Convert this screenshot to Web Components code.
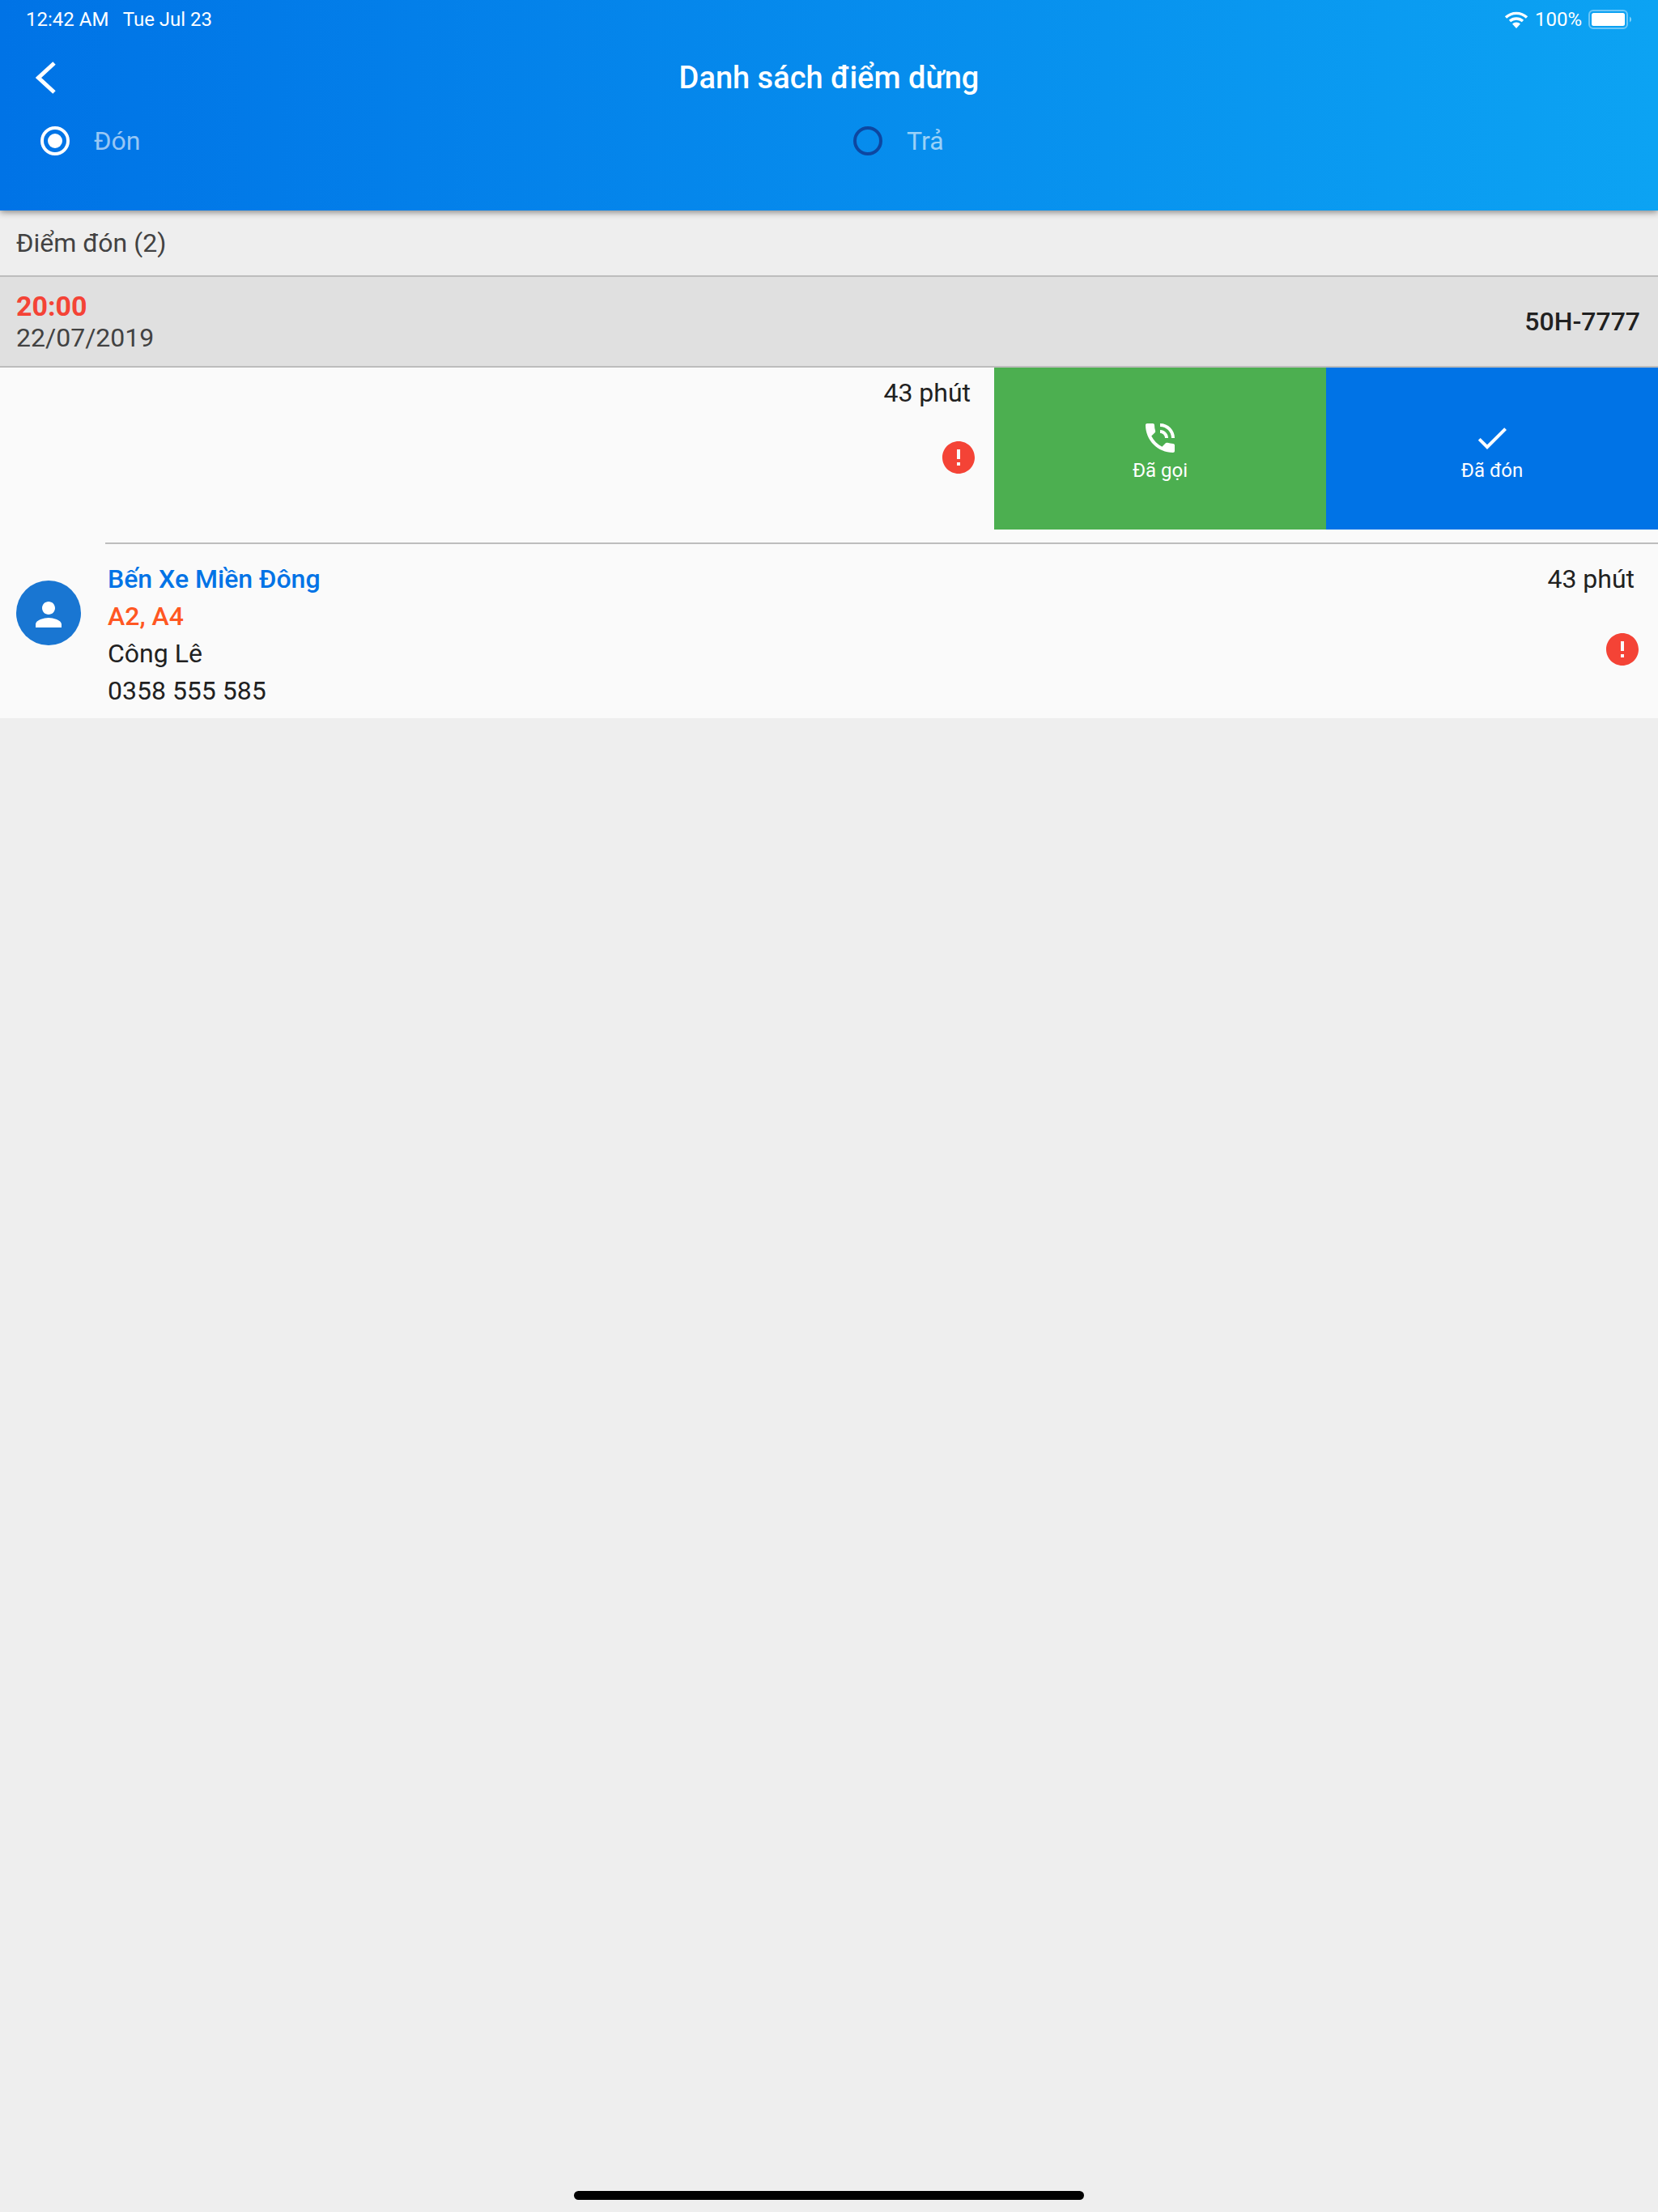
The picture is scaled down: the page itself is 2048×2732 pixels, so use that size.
<!DOCTYPE html>
<html lang="vi">
<head>
<meta charset="utf-8">
<title>Danh sách điểm dừng</title>
<style>
    html, body { margin: 0; height: 100%; }
    body {
        display: flex;
        flex-direction: column;
        height: 2732px;
        background: #eeeeee;
        font-family: Roboto, "Liberation Sans", sans-serif;
    }
</style>
</head>
<body>
    <stop-header>
        <radio-choice slot="tabs" checked style="width:1004px">Đón</radio-choice>
        <radio-choice slot="tabs">Trả</radio-choice>
    </stop-header>
    <section-title>Điểm đón (2)</section-title>
    <trip-bar time="20:00" date="22/07/2019" plate="50H-7777"></trip-bar>
    <stop-row class="swiped" duration="43 phút">
        <swipe-action slot="actions" icon="phone" color="#4caf50">Đã gọi</swipe-action>
        <swipe-action slot="actions" icon="check" color="#0073e6">Đã đón</swipe-action>
    </stop-row>
    <stop-row stop="Bến Xe Miền Đông" seats="A2, A4" person="Công Lê" phone="0358 555 585" duration="43 phút"></stop-row>
    <home-bar></home-bar>

<script>
const ICONS = {
    phone: "M20 15.5c-1.25 0-2.45-.2-3.57-.57-.35-.11-.74-.03-1.02.24l-2.2 2.2c-2.83-1.44-5.15-3.75-6.59-6.59l2.2-2.21c.28-.26.36-.65.25-1C8.7 6.45 8.5 5.25 8.5 4c0-.55-.45-1-1-1H4c-.55 0-1 .45-1 1 0 9.39 7.61 17 17 17 .55 0 1-.45 1-1v-3.5c0-.55-.45-1-1-1zM19 12h2c0-4.97-4.03-9-9-9v2c3.87 0 7 3.13 7 7zm-4 0h2c0-2.76-2.24-5-5-5v2c1.66 0 3 1.34 3 3z",
    check: "M9 16.17L4.83 12l-1.42 1.41L9 19 21 7l-1.41-1.41z",
    person: "M12 12c2.21 0 4-1.79 4-4s-1.79-4-4-4-4 1.79-4 4 1.79 4 4 4zm0 2c-2.67 0-8 1.34-8 4v2h16v-2c0-2.66-5.33-4-8-4z",
    error: "M12 2C6.48 2 2 6.48 2 12s4.48 10 10 10 10-4.48 10-10S17.52 2 12 2zm1 15h-2v-2h2v2zm0-4h-2V7h2v6z"
};

class stopHeader extends HTMLElement {
    constructor() {
        super();
        this.shadow = this.attachShadow({mode: "open"});
        this.shadow.innerHTML = `
        <style>
            :host {
                display: block;
                height: 260px;
                position: relative;
                z-index: 1;
                color: white;
                background: linear-gradient(90deg, #0073e6, #0ca3f3);
                box-shadow: 0 2px 8px rgba(0,0,0,.45);
            }
            #status {
                display: flex;
                align-items: center;
                height: 48px;
                padding: 0 32px;
                font-size: 24px;
                white-space: pre;
            }
            #status .right {
                margin-left: auto;
                display: flex;
                align-items: center;
            }
            #title {
                display: flex;
                align-items: center;
                height: 96px;
                padding-left: 44px;
            }
            #title svg { flex: none; }
            #title h1 {
                flex: 1;
                margin: 0 69px 0 0;
                text-align: center;
                font-size: 38px;
                font-weight: 500;
            }
            #tabs {
                display: flex;
                padding-left: 50px;
                margin-top: 12px;
            }
        </style>
        <div id="status">
            <span>12:42 AM   Tue Jul 23</span>
            <span class="right">
                <svg width="30" height="24" viewBox="0 0 30 24" fill="none" stroke="white" stroke-width="3.4">
                    <path d="M2 9.5a19 19 0 0 1 26 0"/>
                    <path d="M7 14a12 12 0 0 1 16 0"/>
                    <path d="M15 23l-5-5.500a7 7 0 0 1 10 0z" fill="white" stroke="none"/>
                </svg>
                <span style="margin-left:8px">100%</span>
                <svg width="54" height="24" viewBox="0 0 54 24" style="margin-left:8px">
                    <rect x="1" y="1" width="47" height="22" rx="5" fill="none" stroke="white" stroke-opacity=".4" stroke-width="2"/>
                    <rect x="4" y="4" width="41" height="16" rx="2.500" fill="white"/>
                    <path d="M51 8.500a4 4 0 0 1 0 7z" fill="white" fill-opacity=".5"/>
                </svg>
            </span>
        </div>
        <div id="title">
            <svg width="25" height="40" viewBox="0 0 25 40" fill="none" stroke="white" stroke-width="5">
                <path d="M23 2L3.500 20 23 38" />
            </svg>
            <h1>Danh sách điểm dừng</h1>
        </div>
        <div id="tabs"><slot name="tabs"></slot></div>
        `;
    }
}

class radioChoice extends HTMLElement {
    constructor() {
        super();
        this.shadow = this.attachShadow({mode: "open"});
        this.shadow.innerHTML = `
        <style>
            :host {
                display: flex;
                align-items: center;
                height: 36px;
                gap: 30px;
                font-size: 32px;
                color: rgba(255,255,255,.6);
            }
        </style>
        <svg width="36" height="36" viewBox="0 0 36 36"></svg>
        <span><slot></slot></span>
        `;
    }

    connectedCallback() {
        let svg = this.shadow.querySelector("svg");
        if (this.hasAttribute("checked")) {
            svg.innerHTML = `<circle cx="18" cy="18" r="16" fill="none" stroke="white" stroke-width="4"/>
                <circle cx="18" cy="18" r="9" fill="white"/>`;
        } else {
            svg.innerHTML = `<circle cx="18" cy="18" r="16" fill="none" stroke="#0d47a1" stroke-width="4"/>`;
        }
    }
}

class sectionTitle extends HTMLElement {
    constructor() {
        super();
        this.shadow = this.attachShadow({mode: "open"});
        this.shadow.innerHTML = `
        <style>
            :host {
                display: flex;
                align-items: center;
                height: 80px;
                padding-left: 20px;
                font-size: 32px;
                color: #424242;
                border-bottom: 2px solid #bdbdbd;
            }
        </style>
        <slot></slot>
        `;
    }
}

class tripBar extends HTMLElement {
    constructor() {
        super();
        this.shadow = this.attachShadow({mode: "open"});
        this.shadow.innerHTML = `
        <style>
            :host {
                display: flex;
                align-items: center;
                justify-content: space-between;
                height: 110px;
                padding: 0 22px 0 20px;
                background: #e0e0e0;
                border-bottom: 2px solid #bdbdbd;
            }
            #time { font-size: 34px; font-weight: 700; color: #f44336; line-height: 40px; }
            #date { font-size: 32px; color: #424242; line-height: 38px; }
            #plate { font-size: 32px; font-weight: 500; color: #212121; }
        </style>
        <div>
            <div id="time"></div>
            <div id="date"></div>
        </div>
        <div id="plate"></div>
        `;
    }

    connectedCallback() {
        this.shadow.querySelector("#time").textContent = this.getAttribute("time");
        this.shadow.querySelector("#date").textContent = this.getAttribute("date");
        this.shadow.querySelector("#plate").textContent = this.getAttribute("plate");
    }
}

class stopRow extends HTMLElement {
    constructor() {
        super();
        this.shadow = this.attachShadow({mode: "open"});
        this.shadow.innerHTML = `
        <style>
            :host {
                display: block;
                background: #fafafa;
                font-size: 32px;
                color: #212121;
            }
            :host(.swiped) #row { height: 200px; padding-bottom: 16px; }
            :host(.swiped) #info { display: none; }
            :host(.swiped) #avatar { display: none; }
            :host(.swiped) #side { padding-top: 8px; height: 192px; }
            :host(.swiped) #err { margin-top: 37px; }
            #row { display: flex; }
            #main {
                flex: 1;
                display: flex;
                min-width: 0;
            }
            #avatar {
                flex: none;
                width: 80px;
                height: 80px;
                margin: 47px 33px 0 20px;
                border-radius: 50%;
                background: #1976d2;
                display: flex;
                align-items: center;
                justify-content: center;
            }
            #body {
                flex: 1;
                display: flex;
                border-top: 2px solid #bdbdbd;
                margin-left: -3px;
                padding-left: 3px;
                height: 215px;
            }
            :host(.swiped) #body { border-top: 0; height: auto; }
            #info { flex: 1; padding-top: 20px; line-height: 46px; }
            #stop { color: #0073e6; font-weight: 500; }
            #seats { color: #ff5722; font-weight: 500; }
            #side {
                margin-left: auto;
                display: flex;
                flex-direction: column;
                align-items: flex-end;
                padding: 20px 24px 0 0;
                line-height: 46px;
            }
            #dur { margin-right: 5px; }
            #err { margin-top: 44px; display: block; height: 40px; }
            #err svg, #avatar svg { display: block; }
            #err svg { margin: -4px; }
            #actions { display: flex; }
            #avatar svg { position: relative; top: 2px; }
        </style>
        <div id="row">
            <div id="main">
                <div id="avatar">
                    <svg width="48" height="48" viewBox="0 0 24 24" fill="white"><path d="${ICONS.person}"/></svg>
                </div>
                <div id="body">
                    <div id="info">
                        <div id="stop"></div>
                        <div id="seats"></div>
                        <div id="person"></div>
                        <div id="phone"></div>
                    </div>
                    <div id="side">
                        <span id="dur"></span>
                        <span id="err"><svg width="48" height="48" viewBox="0 0 24 24" fill="#f44336"><path d="${ICONS.error}"/></svg></span>
                    </div>
                </div>
            </div>
            <div id="actions"><slot name="actions"></slot></div>
        </div>
        `;
    }

    connectedCallback() {
        for (let key of ["stop", "seats", "person", "phone"]) {
            this.shadow.querySelector("#" + key).textContent = this.getAttribute(key) || "";
        }
        this.shadow.querySelector("#dur").textContent = this.getAttribute("duration");
    }
}

class swipeAction extends HTMLElement {
    constructor() {
        super();
        this.shadow = this.attachShadow({mode: "open"});
        this.shadow.innerHTML = `
        <style>
            :host {
                display: flex;
                flex-direction: column;
                align-items: center;
                width: 410px;
                height: 200px;
                padding-top: 63px;
                box-sizing: border-box;
                color: white;
                font-size: 24px;
                line-height: 32px;
            }
            svg { display: block; }
        </style>
        <svg width="48" height="48" viewBox="0 0 24 24" fill="white"><path></path></svg>
        <slot></slot>
        `;
    }

    connectedCallback() {
        this.style.background = this.getAttribute("color");
        this.shadow.querySelector("path").setAttribute("d", ICONS[this.getAttribute("icon")]);
    }
}

class homeBar extends HTMLElement {
    constructor() {
        super();
        this.shadow = this.attachShadow({mode: "open"});
        this.shadow.innerHTML = `
        <style>
            :host {
                display: flex;
                justify-content: center;
                margin-top: auto;
                padding-bottom: 15px;
            }
            div { width: 630px; height: 11px; border-radius: 6px; background: black; }
        </style>
        <div></div>
        `;
    }
}

customElements.define("stop-header", stopHeader);
customElements.define("radio-choice", radioChoice);
customElements.define("section-title", sectionTitle);
customElements.define("trip-bar", tripBar);
customElements.define("stop-row", stopRow);
customElements.define("swipe-action", swipeAction);
customElements.define("home-bar", homeBar);
</script>
</body>
</html>
